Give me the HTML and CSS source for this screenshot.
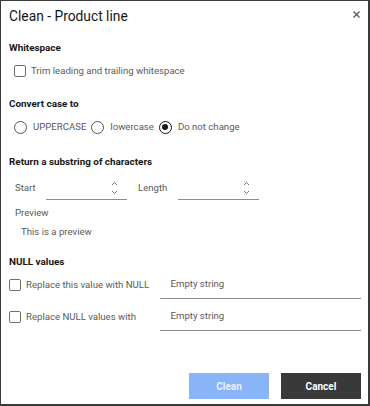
FILE: index.html
```html
<!DOCTYPE html>
<html>
<head>
<meta charset="utf-8">
<link rel="stylesheet" href="styles.css">
</head>
<body>
<div class="dialog">
  <div class="header">
    <div class="title">Clean - Product line</div>
    <svg class="close" width="7" height="7" viewBox="0 0 7 7"><path d="M0.5 0.5L6.5 6.5M6.5 0.5L0.5 6.5" stroke="#555" stroke-width="1.2"/></svg>
  </div>

  <div class="heading h-white">Whitespace</div>
  <div class="row indent check-row1">
    <span class="checkbox"></span><span class="label">Trim leading and trailing whitespace</span>
  </div>

  <div class="heading h-case">Convert case to</div>
  <div class="row indent radio-row">
    <span class="radio"></span><span class="label">UPPERCASE</span>
    <span class="radio"></span><span class="label">lowercase</span>
    <span class="radio on"></span><span class="label">Do not change</span>
  </div>

  <div class="heading h-sub">Return a substring of characters</div>
  <div class="sub-row">
    <span class="label start-label">Start</span>
    <div class="num">
      <div class="spin">
        <svg width="7" height="14" viewBox="0 0 7 14"><path d="M1 4L3.5 1.5L6 4M1 10L3.5 12.5L6 10" fill="none" stroke="#666" stroke-width="0.9"/></svg>
      </div>
    </div>
    <span class="label len-label">Length</span>
    <div class="num">
      <div class="spin">
        <svg width="7" height="14" viewBox="0 0 7 14"><path d="M1 4L3.5 1.5L6 4M1 10L3.5 12.5L6 10" fill="none" stroke="#666" stroke-width="0.9"/></svg>
      </div>
    </div>
  </div>
  <div class="label preview-label">Preview</div>
  <div class="label preview-text">This is a preview</div>

  <div class="heading h-null">NULL values</div>
  <div class="null-row first">
    <div class="null-check"><span class="checkbox"></span><span class="label">Replace this value with NULL</span></div>
    <div class="text-input">Empty string</div>
  </div>
  <div class="null-row second">
    <div class="null-check"><span class="checkbox"></span><span class="label">Replace NULL values with</span></div>
    <div class="text-input">Empty string</div>
  </div>

  <div class="footer">
    <button class="btn primary">Clean</button>
    <button class="btn secondary">Cancel</button>
  </div>
</div>
</body>
</html>
```

FILE: styles.css
```css
* { box-sizing: border-box; }
html, body { margin: 0; padding: 0; background: #fff; }
body { font-family: Roboto, "Liberation Sans", Arial, sans-serif; color: #161616; }

.dialog {
  width: 370px;
  height: 406px;
  border: 1px solid #3a3a3a;
  border-right-width: 2px;
  border-bottom-width: 2px;
  padding: 0 7px 0 8px;
  display: flex;
  flex-direction: column;
  position: relative;
}

.header {
  height: 30px;
  display: flex;
  align-items: center;
  justify-content: space-between;
}
.title { font-size: 13.8px; line-height: 30px; color: #161616; }
.close { margin-right: 1px; margin-top: -3px; }

.heading {
  font-size: 9.9px;
  font-weight: bold;
  line-height: 14px;
  color: #161616;
}
.h-white { margin-top: 10px; }
.h-case { margin-top: 16px; }
.h-sub { margin-top: 18px; }
.h-null { margin-top: 16px; }

.label { font-size: 9.6px; line-height: 14px; color: #5a5a5a; }

.row { display: flex; align-items: center; height: 20px; }
.indent { padding-left: 5px; }
.check-row1 { margin-top: 6px; }
.radio-row { margin-top: 6px; }

.checkbox {
  width: 12px; height: 12px;
  border: 1px solid #6f6f6f;
  border-radius: 2px;
  margin-right: 5px;
  flex: none;
}

.radio {
  width: 13px; height: 13px;
  border: 1px solid #555;
  border-radius: 50%;
  margin-right: 6px;
  flex: none;
  position: relative;
}
.radio-row .label { margin-right: 5px; }
.radio.on { border-color: #161616; }
.radio.on::after {
  content: "";
  position: absolute;
  left: 2.5px; top: 2.5px;
  width: 6px; height: 6px;
  border-radius: 50%;
  background: #161616;
}

.sub-row {
  display: flex;
  align-items: stretch;
  height: 24px;
  margin-top: 7px;
  padding-left: 6px;
}
.sub-row .label { align-self: center; margin-top: 0; }
.start-label { width: 31px; }
.len-label { width: 40px; margin-left: 11px; }
.num {
  width: 81px;
  border-bottom: 1px solid #8d8d8d;
  display: flex;
  justify-content: flex-end;
  align-items: center;
  padding-right: 9px;
}
.spin { display: flex; padding-top: 0; }

.preview-label { margin-top: 6px; padding-left: 6px; }
.preview-text { margin-top: 5px; padding-left: 12px; }

.null-row {
  display: flex;
  height: 28px;
}
.null-row.first { margin-top: 2px; }
.null-row.second { margin-top: 4px; }
.null-check {
  width: 151px;
  display: flex;
  align-items: flex-start;
  padding-top: 8px;
}
.null-check .checkbox { margin-top: 0; }
.null-check .label { margin-top: -1px; }
.text-input {
  width: 202px;
  border-bottom: 1px solid #8d8d8d;
  padding: 6px 0 0 11px;
  font-size: 9.6px;
  line-height: 14px;
  color: #5a5a5a;
}

.footer {
  margin-top: auto;
  margin-bottom: 5px;
  display: flex;
  justify-content: flex-end;
  gap: 12px;
}
.btn {
  width: 80px;
  height: 26px;
  border: none;
  font-family: Roboto, "Liberation Sans", Arial, sans-serif;
  font-size: 10px;
  font-weight: bold;
  padding: 0;
}
.primary { background: #8ab4f8; color: #e8f0ff; }
.secondary { background: #393939; color: #fff; }
```
